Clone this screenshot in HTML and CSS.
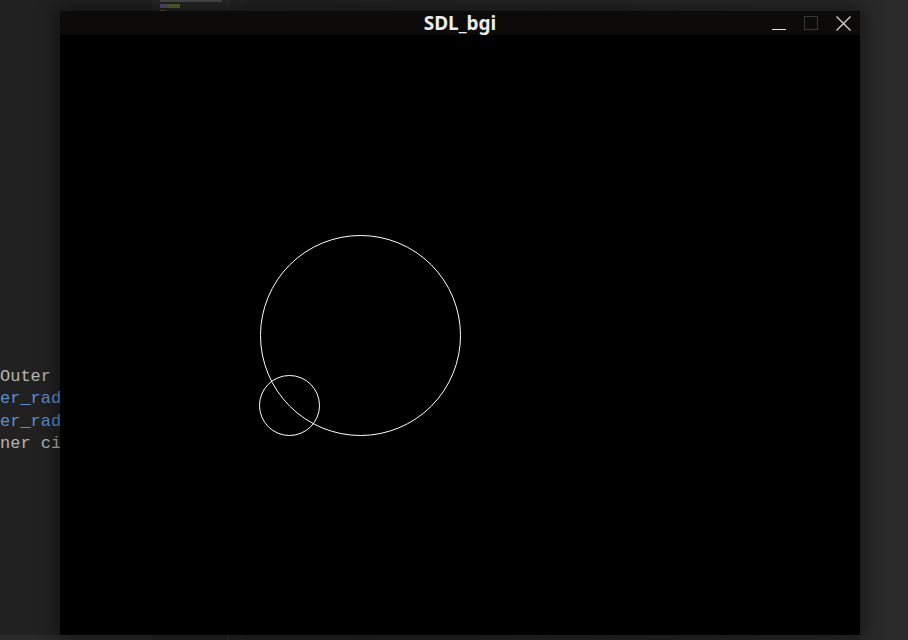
FILE: index.html
```html
<!DOCTYPE html>
<html>
<head>
<meta charset="utf-8">
<link rel="stylesheet" href="styles.css">
</head>
<body>
<div class="desktop">
  <div class="editor">
    <div class="code">
      <div class="line plain">Outer ci</div>
      <div class="line ident">er_radius</div>
      <div class="line ident">er_radius</div>
      <div class="line plain">ner circle</div>
    </div>
  </div>
  <div class="minimap">
    <div class="mm-line"></div>
    <div class="mm-row"><span class="mm-purple"></span><span class="mm-green"></span></div>
    <div class="mm-row"><span class="mm-orange"></span></div>
    <div class="mm-bottom"></div>
  </div>
  <div class="side"></div>
  <div class="rest"></div>

  <div class="window">
    <div class="titlebar">
      <span class="title">SDL_bgi</span>
      <div class="controls">
        <span class="btn-min"></span>
        <span class="btn-max"></span>
        <svg class="btn-close" width="15" height="15" viewBox="0 0 15 15">
          <path d="M0.5 0.5 L14.5 14.5 M14.5 0.5 L0.5 14.5" stroke="#dcdcdc" stroke-width="1.2" fill="none"/>
        </svg>
      </div>
    </div>
    <svg class="canvas" width="800" height="600" viewBox="0 0 800 600">
      <rect width="800" height="600" fill="#000"/>
      <circle cx="300.5" cy="300.5" r="100" stroke="#fff" stroke-width="1" fill="none"/>
      <circle cx="229.5" cy="370.5" r="30" stroke="#fff" stroke-width="1" fill="none"/>
    </svg>
  </div>
</div>
</body>
</html>
```

FILE: styles.css
```css
html, body {
  margin: 0;
  padding: 0;
  width: 908px;
  height: 640px;
  overflow: hidden;
  background: #222222;
}

.desktop {
  position: relative;
  display: flex;
  width: 908px;
  height: 640px;
}

.editor {
  width: 152px;
  background: #212121;
  border-bottom: 5px solid #2a2a2a;
  box-sizing: border-box;
}

.code {
  padding-top: 366px;
  font-family: "Liberation Mono", monospace;
  font-size: 17px;
  line-height: 22.4px;
}

.line {
  white-space: pre;
}

.line.plain { color: #b4b4b4; }
.line.ident { color: #5d8fcf; }

.minimap {
  position: relative;
  width: 77px;
  background: #262626;
  border-right: 1px solid #333333;
  box-sizing: border-box;
  padding-left: 8px;
}

.mm-line {
  width: 62px;
  height: 2px;
  background: #4a4a4a;
  margin-bottom: 2px;
}

.mm-row {
  display: flex;
  height: 4px;
  margin-bottom: 2px;
}

.mm-purple {
  width: 8px;
  height: 4px;
  background: #5c4e70;
}

.mm-green {
  width: 12px;
  height: 4px;
  background: #5b6a30;
}

.mm-orange {
  width: 6px;
  height: 2px;
  background: #6a4e34;
}

.mm-bottom {
  position: absolute;
  left: 0;
  right: 0;
  bottom: 0;
  height: 5px;
  background: #232323;
}

.side {
  width: 17px;
  background: #242424;
}

.rest {
  flex: 1;
  background: linear-gradient(to right, #222222 0%, #262626 60%, #2a2a2a 100%);
}

.window {
  position: absolute;
  left: 60px;
  top: 11px;
  width: 800px;
  height: 624px;
  display: flex;
  flex-direction: column;
  box-shadow: 0 0 18px 4px rgba(0, 0, 0, 0.45);
}

.titlebar {
  position: relative;
  height: 24px;
  background: #0c0b0a;
  display: flex;
  align-items: center;
  justify-content: center;
}

.title {
  font-family: "Noto Sans", "Open Sans", sans-serif;
  font-weight: 700;
  font-size: 19px;
  color: #ececec;
  line-height: 24px;
}

.controls {
  position: absolute;
  right: 9px;
  top: 5px;
  display: flex;
  align-items: flex-start;
  gap: 18px;
}

.btn-min {
  width: 14px;
  height: 1px;
  margin-top: 13px;
  background: #e6e6e6;
}

.btn-max {
  width: 12px;
  height: 12px;
  border: 1px solid #2f3b33;
}

.btn-close {
  display: block;
}

.canvas {
  display: block;
}
```
